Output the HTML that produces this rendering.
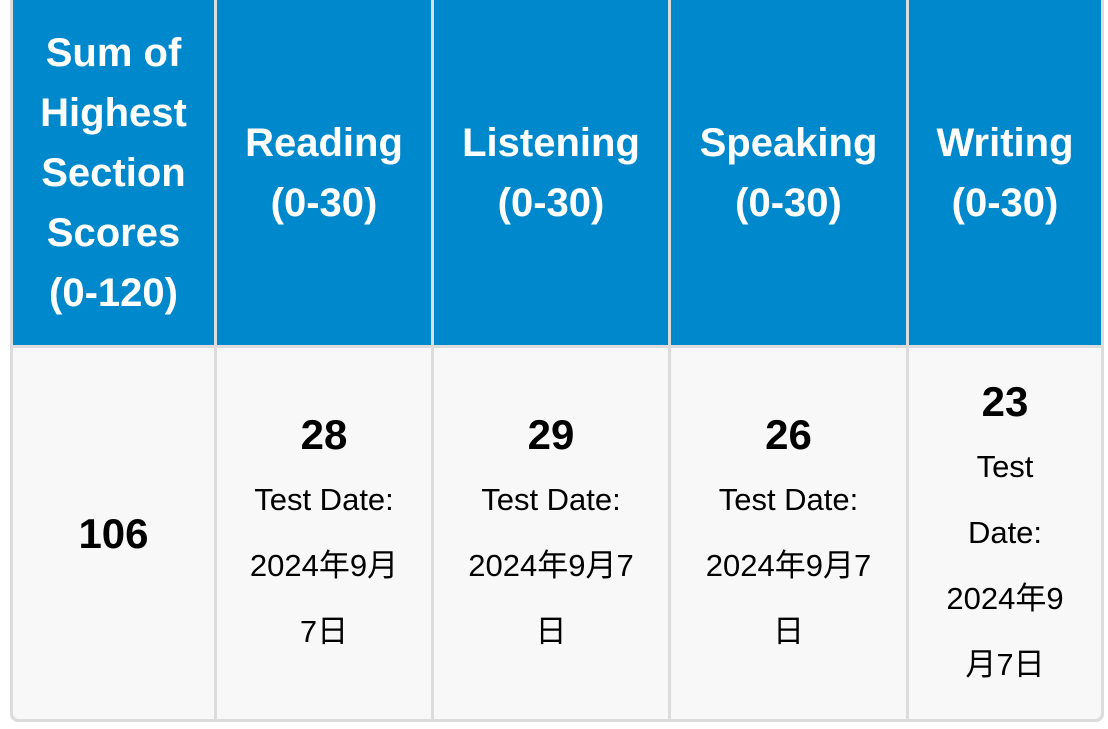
<!DOCTYPE html>
<html><head><meta charset="utf-8"><style>
html,body{margin:0;padding:0;width:1108px;height:729px;background:#fff;overflow:hidden;font-family:"Liberation Sans","Noto Sans CJK SC",sans-serif}
.c{position:absolute;display:flex;flex-direction:column;align-items:center;justify-content:center;text-align:center;box-sizing:border-box}
.h{background:#0088cc;color:#fff;font-weight:bold;font-size:40px;line-height:60px;top:0;height:345px}
.b{background:#f8f8f8;color:#000;top:348px;height:371px;font-size:31px;line-height:66px}
.n{font-weight:bold;font-size:42px;line-height:64px}
#frame{position:absolute;left:10px;top:0;width:1094px;height:722px;background:#dcdcdc;border-radius:0 0 8px 8px}
</style></head><body>
<div id="frame"></div>
<div class="c h" style="left:13px;width:201px">Sum of<br>Highest<br>Section<br>Scores<br>(0-120)</div>
<div class="c h" style="left:217px;width:214px">Reading<br>(0-30)</div>
<div class="c h" style="left:434px;width:234px">Listening<br>(0-30)</div>
<div class="c h" style="left:671px;width:235px">Speaking<br>(0-30)</div>
<div class="c h" style="left:909px;width:192px">Writing<br>(0-30)</div>

<div class="c b" style="left:13px;width:201px;border-bottom-left-radius:6px"><div class="n">106</div></div>
<div class="c b" style="left:217px;width:214px"><div class="n">28</div><div>Test Date:<br>2024年9月<br>7日</div></div>
<div class="c b" style="left:434px;width:234px"><div class="n">29</div><div>Test Date:<br>2024年9月7<br>日</div></div>
<div class="c b" style="left:671px;width:235px"><div class="n">26</div><div>Test Date:<br>2024年9月7<br>日</div></div>
<div class="c b" style="left:909px;width:192px;border-bottom-right-radius:6px"><div class="n">23</div><div>Test<br>Date:<br>2024年9<br>月7日</div></div>
</body></html>
